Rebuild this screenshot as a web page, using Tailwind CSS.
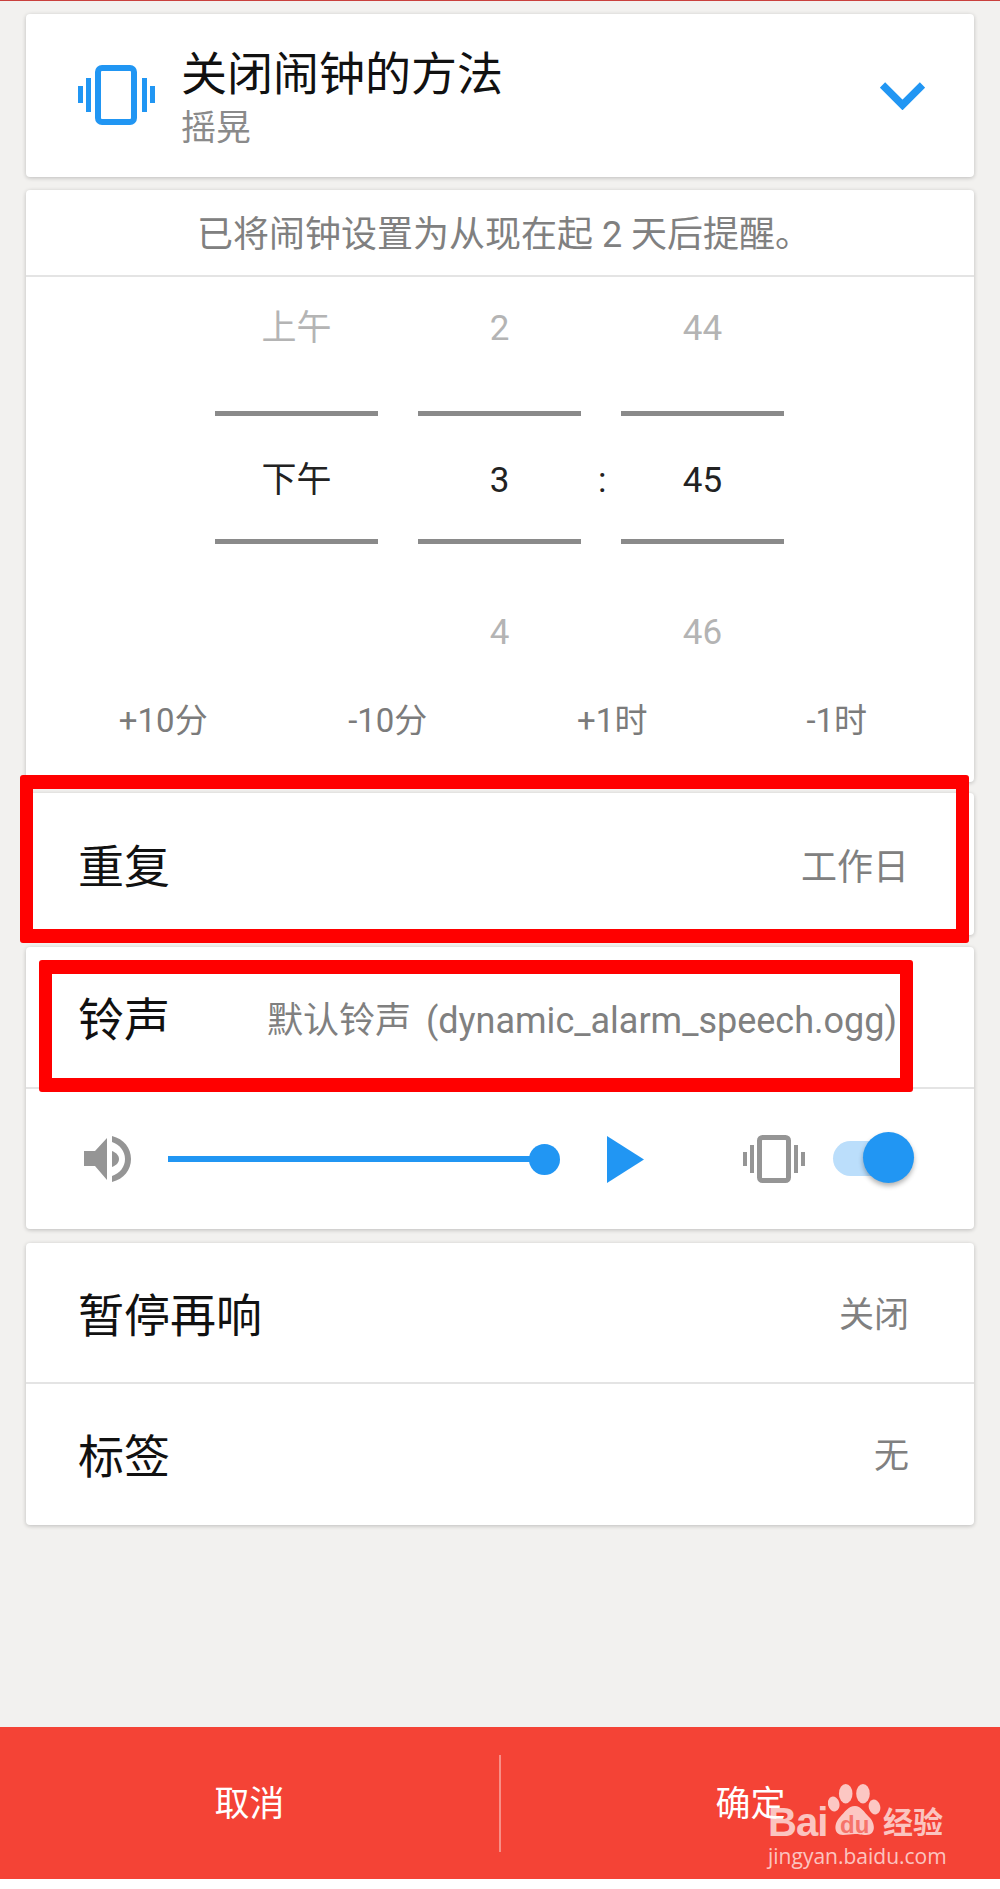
<!DOCTYPE html>
<html lang="zh">
<head>
<meta charset="utf-8">
<script src="https://cdn.jsdelivr.net/npm/@tailwindcss/browser@4"></script>
</head>
<body class="m-0 bg-white">
<div class="relative w-[1000px] h-[1889px] overflow-hidden flex flex-col bg-[#f2f1ef] font-['Roboto','Noto_Sans_CJK_SC',sans-serif]">
  <div class="h-px bg-[#c9403d] shrink-0"></div>

  <main class="flex-1 flex flex-col px-[26px] pt-[13px]">
    <!-- alarm off method -->
    <section class="h-[163px] bg-white rounded-[4px] shadow-[0_1px_4px_rgba(0,0,0,0.22)] flex items-center pl-[52px] pr-[49px]">
      <svg class="w-[77px] h-[60px] shrink-0 mt-[-2px]" viewBox="0 0 77 60" fill="#2196f3">
        <rect x="20" y="3" width="36" height="54" rx="4" fill="none" stroke="#2196f3" stroke-width="6"/>
        <rect x="8" y="13" width="5" height="34"/><rect x="0" y="21" width="5" height="17"/>
        <rect x="64" y="13" width="5" height="34"/><rect x="72" y="21" width="5" height="17"/>
      </svg>
      <div class="ml-[26px] flex-1 pt-[6px]">
        <div class="text-[46px] leading-[56px] text-[#111]">关闭闹钟的方法</div>
        <div class="text-[35px] leading-[46px] text-[#8a8a8a] mt-[4px]">摇晃</div>
      </div>
      <svg class="w-[45px] h-[28px] shrink-0 mt-[1px]" viewBox="0 0 45 28" fill="none" stroke="#2196f3" stroke-width="7.5"><path d="M2.5 3 L22.5 23 L42.5 3"/></svg>
    </section>

    <!-- time picker -->
    <section class="mt-[13px] h-[592px] bg-white rounded-[4px] shadow-[0_1px_4px_rgba(0,0,0,0.22)] flex flex-col">
      <div class="h-[87px] shrink-0 flex items-center justify-center pt-[5px] pl-[8px] text-[36px] text-[#808080] border-b-2 border-[#e4e4e4]">已将闹钟设置为从现在起 2 天后提醒。</div>
      <div class="flex pl-[189px] gap-[40px] text-[35px]">
        <div class="w-[163px] text-center">
          <div class="h-[134px] pt-[27px] leading-[50px] text-[#b4b4b4]">上午</div>
          <div class="h-[133px] border-y-[5px] border-[#8a8a8a] flex items-center justify-center pt-[8px] text-[#222]">下午</div>
          <div class="h-[88px]"></div>
        </div>
        <div class="w-[163px] text-center">
          <div class="h-[134px] pt-[27px] leading-[50px] text-[#b4b4b4]">2</div>
          <div class="h-[133px] border-y-[5px] border-[#8a8a8a] flex items-center justify-center pt-[8px] text-[#222]">3</div>
          <div class="h-[88px] pt-[64px] leading-[50px] text-[#b4b4b4]">4</div>
        </div>
        <div class="relative w-[163px] text-center">
          <div class="h-[134px] pt-[27px] leading-[50px] text-[#b4b4b4]">44</div>
          <div class="h-[133px] border-y-[5px] border-[#8a8a8a] flex items-center justify-center pt-[8px] text-[#222]">45</div>
          <div class="h-[88px] pt-[64px] leading-[50px] text-[#b4b4b4]">46</div>
          <span class="absolute left-[-23px] top-[179px] leading-[50px] text-[#222]">:</span>
        </div>
      </div>
      <div class="grid grid-cols-4 px-[25px] mt-[66px] text-[33px] leading-[46px] text-[#7b7b7b] text-center">
        <span>+10分</span><span>-10分</span><span>+1时</span><span>-1时</span>
      </div>
    </section>

    <!-- repeat -->
    <section class="mt-[11px] h-[142px] bg-white rounded-[4px] shadow-[0_1px_4px_rgba(0,0,0,0.22)] flex items-center justify-between pl-[52px] pr-[65px] pt-[7px]">
      <span class="text-[46px] text-[#111]">重复</span>
      <span class="text-[36px] text-[#808080]">工作日</span>
    </section>

    <!-- ringtone -->
    <section class="mt-[12px] h-[282px] bg-white rounded-[4px] shadow-[0_1px_4px_rgba(0,0,0,0.22)] flex flex-col">
      <div class="h-[142px] shrink-0 flex items-center pl-[52px] pt-[7px] border-b-2 border-[#e4e4e4]">
        <span class="text-[46px] text-[#111] w-[189px]">铃声</span>
        <span class="text-[36px] text-[#808080] whitespace-nowrap [word-spacing:6px]">默认铃声 (dynamic_alarm_speech.ogg)</span>
      </div>
      <div class="flex-1 relative flex items-center pl-[58px]">
        <svg class="w-[47px] h-[46px] shrink-0" viewBox="0 0 47 46" fill="#959595">
          <path d="M0 15 H11 L23 2 V44 L11 30 H0 Z"/>
          <path d="M28 15 C33 17 35 20 35 23 C35 26 33 29 28 31 Z"/>
          <path d="M28 0 C40 3 47 12 47 23 C47 34 40 43 28 46 V40 C36 37 41 31 41 23 C41 15 36 9 28 6 Z"/>
        </svg>
        <div class="ml-[37px] w-[392px] h-[32px] shrink-0 flex items-center">
          <div class="flex-1 h-[6px] bg-[#2196f3]"></div>
          <div class="w-[31px] h-[31px] rounded-full bg-[#2196f3] -ml-px"></div>
        </div>
        <svg class="ml-[47px] w-[37px] h-[47px] shrink-0" viewBox="0 0 37 47" fill="#2196f3"><path d="M0 0 L37 23.5 L0 47 Z"/></svg>
        <svg class="ml-[99px] w-[62px] h-[48px] shrink-0" viewBox="0 0 62 48" fill="#959595">
          <rect x="16.5" y="2.5" width="29" height="43" rx="3" fill="none" stroke="#959595" stroke-width="5"/>
          <rect x="7" y="10" width="4" height="28"/><rect x="0" y="17" width="4" height="14"/>
          <rect x="51" y="10" width="4" height="28"/><rect x="58" y="17" width="4" height="14"/>
        </svg>
        <div class="absolute left-[807px] top-[52px] w-[62px] h-[35px] rounded-full bg-[#bbdefb]"></div>
        <div class="absolute left-[837px] top-[43px] w-[51px] h-[51px] rounded-full bg-[#2196f3] shadow-[0_3px_5px_rgba(0,0,0,0.3)]"></div>
      </div>
    </section>

    <!-- snooze, label -->
    <section class="mt-[14px] h-[282px] bg-white rounded-[4px] shadow-[0_1px_4px_rgba(0,0,0,0.22)] flex flex-col">
      <div class="h-[141px] shrink-0 flex items-center justify-between pl-[52px] pr-[65px] pt-[7px] border-b-2 border-[#e4e4e4]">
        <span class="text-[46px] text-[#111]">暂停再响</span>
        <span class="text-[35px] text-[#808080]">关闭</span>
      </div>
      <div class="flex-1 flex items-center justify-between pl-[52px] pr-[65px] pt-[5px]">
        <span class="text-[46px] text-[#111]">标签</span>
        <span class="text-[35px] text-[#808080]">无</span>
      </div>
    </section>
  </main>

  <footer class="h-[152px] shrink-0 bg-[#f44336] flex items-center text-white text-[35px]">
    <div class="w-[499px] text-center pt-[4px]">取消</div>
    <div class="w-[2px] h-[97px] bg-white/40"></div>
    <div class="flex-1 text-center pt-[4px]">确定</div>
  </footer>
  <div class="h-[10px] shrink-0 bg-white"></div>

  <!-- annotation boxes -->
  <div class="absolute left-[20px] top-[775px] w-[949px] h-[168px] border-x-[13px] border-y-[14px] border-[#ff0000] rounded-[3px]"></div>
  <div class="absolute left-[39px] top-[960px] w-[874px] h-[132px] border-x-[13px] border-y-[14px] border-[#ff0000] rounded-[3px]"></div>

  <!-- watermark -->
  <div class="absolute left-[768px] top-[1780px] w-[180px] h-[92px] text-white/70 font-['Open_Sans','Noto_Sans_CJK_SC',sans-serif]">
    <span class="absolute left-0 top-[20px] text-[40px] leading-[44px] font-bold tracking-[-1px] font-['Liberation_Sans']">Bai</span>
    <svg class="absolute left-[60px] top-[4px] w-[53px] h-[52px]" viewBox="0 0 53 52" fill="currentColor">
      <ellipse cx="5.7" cy="20" rx="5.7" ry="7.5" transform="rotate(-15 5.700 20)"/>
      <ellipse cx="17.7" cy="9.7" rx="6.8" ry="9.700"/>
      <ellipse cx="35" cy="9.700" rx="6.8" ry="9.700"/>
      <ellipse cx="46.500" cy="23" rx="5.7" ry="7.5" transform="rotate(-15 46.500 23)"/>
      <path d="M27 22 C33 22 36 28 41 33 C47 38 49 51 38 51 C33 51 31 50 27 50 C23 50 20 51 15 51 C5 51 6 39 12 33 C17 28 20 22 27 22 Z"/>
    </svg>
    <span class="absolute left-[72px] top-[31px] text-[24px] leading-[28px] font-bold text-[#f6736a] font-['Liberation_Sans']">du</span>
    <span class="absolute left-[115px] top-[24px] text-[30px] leading-[36px] font-bold whitespace-nowrap">经验</span>
    <span class="absolute left-0 top-[62px] text-[21px] leading-[28px] whitespace-nowrap">jingyan.baidu.com</span>
  </div>
</div>
</body>
</html>
